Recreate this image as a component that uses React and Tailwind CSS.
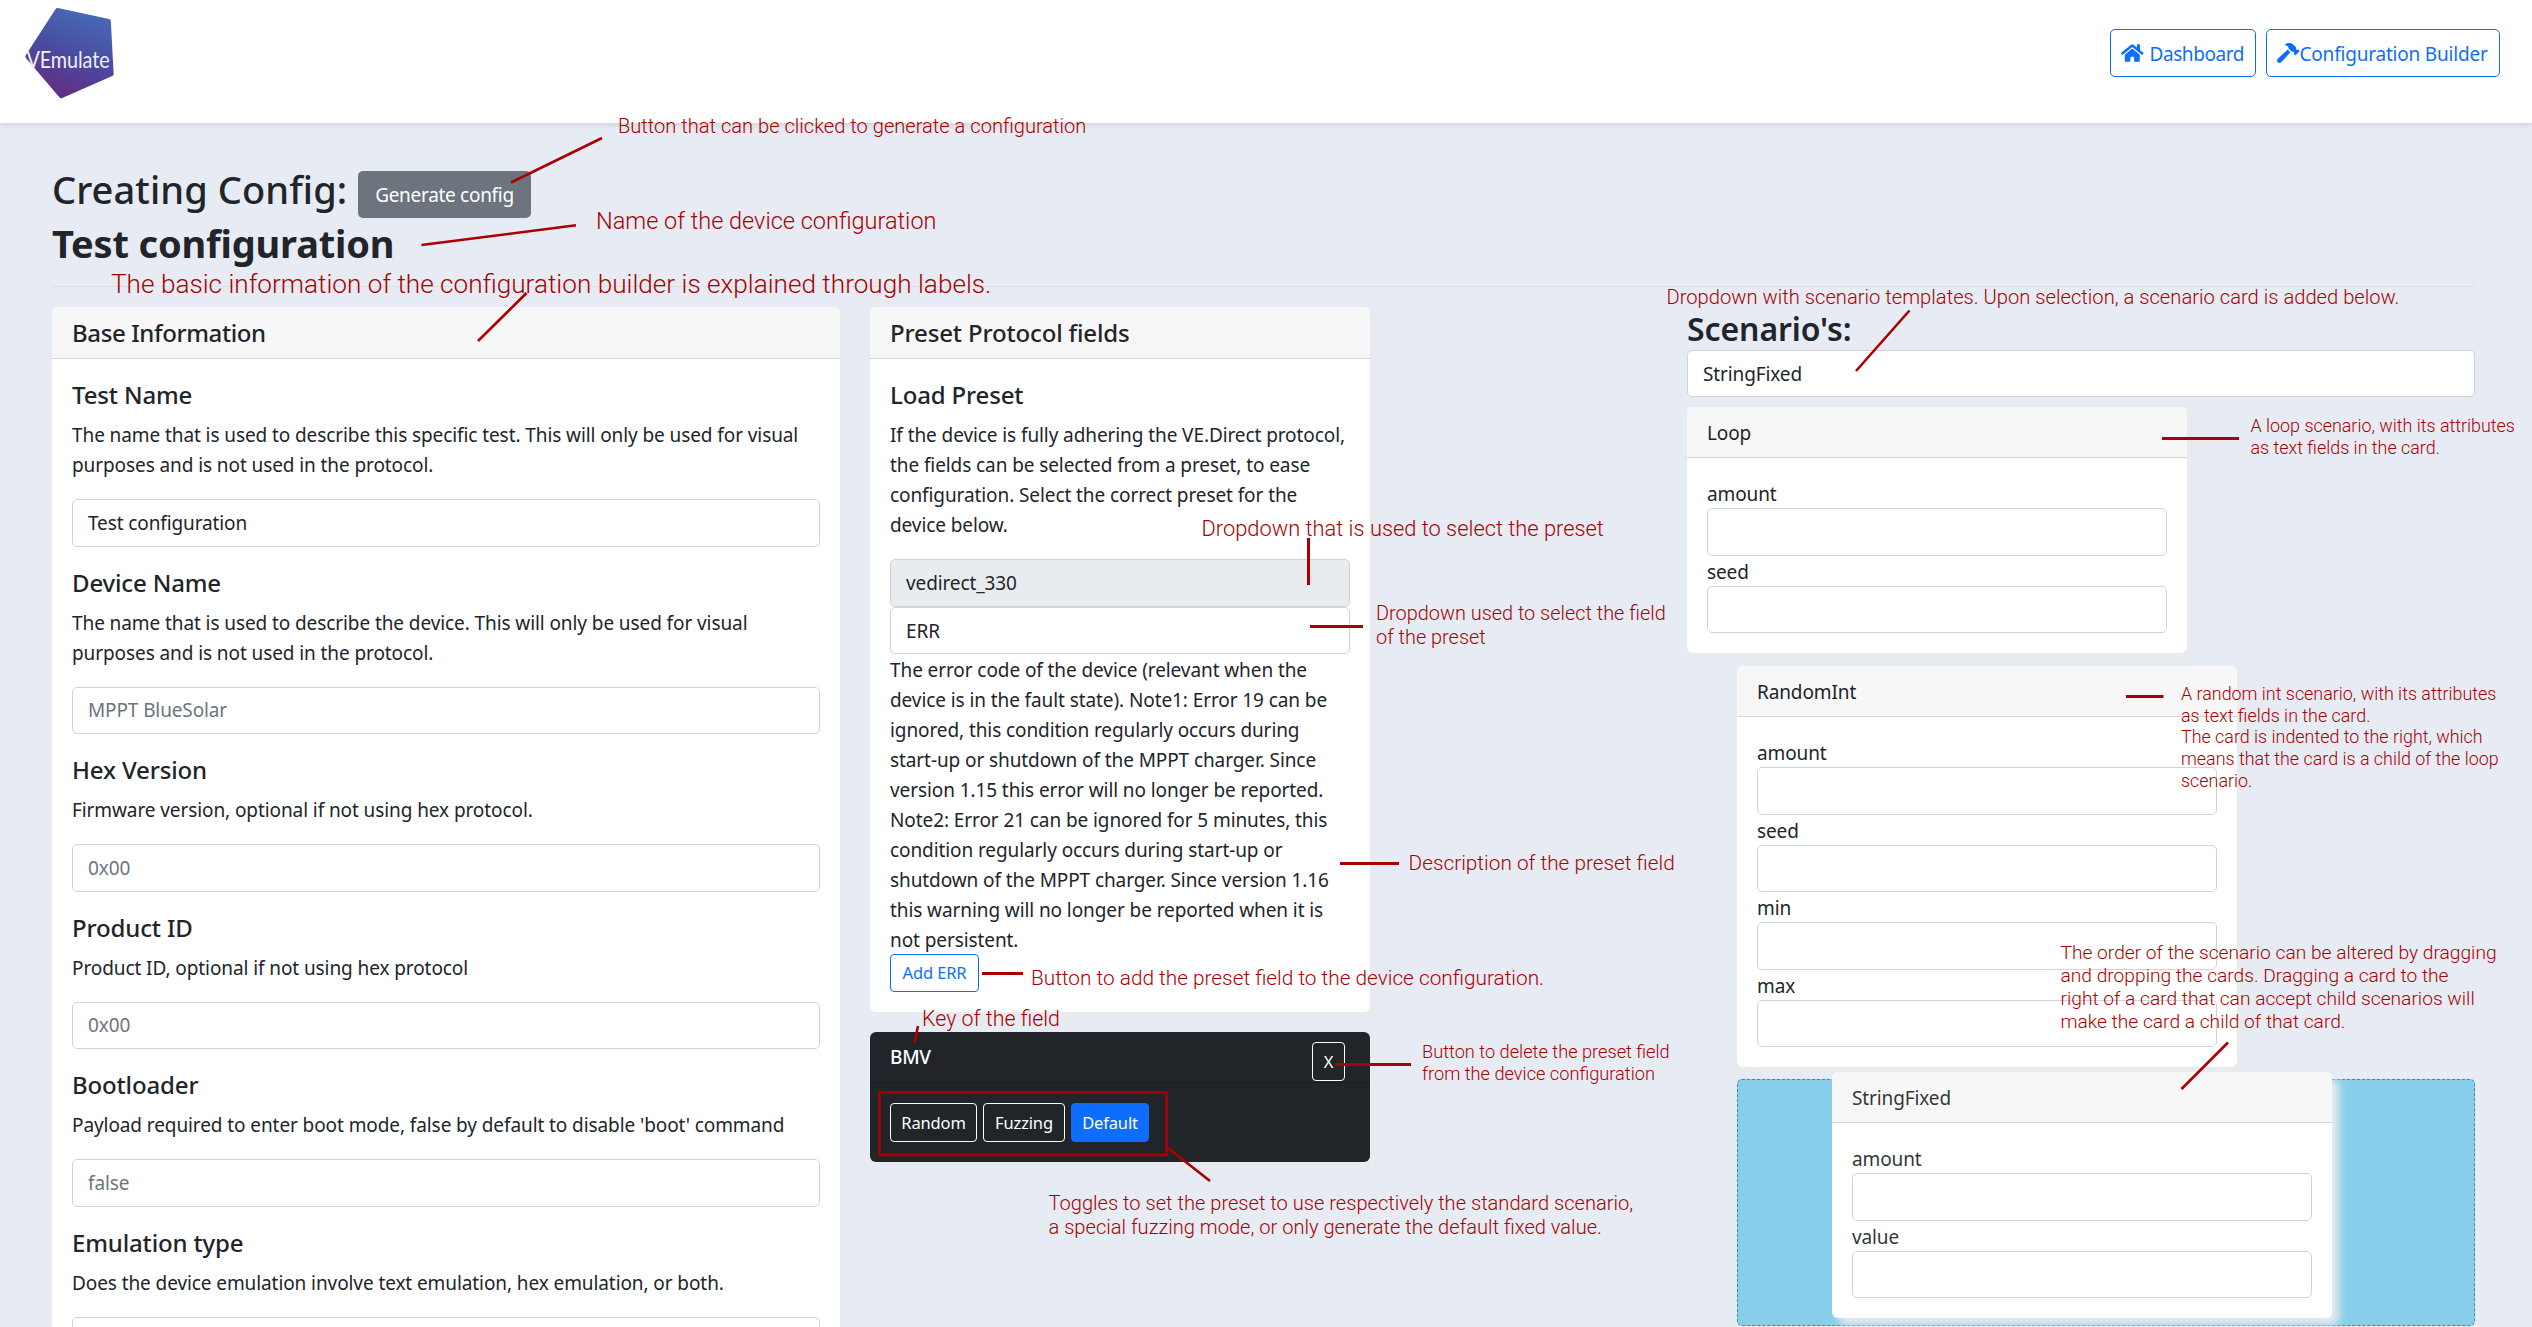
import React from "react";
import { FaHome, FaHammer } from "react-icons/fa";

const control =
  "flex h-[47.5px] w-full items-center rounded-[5px] border border-[#ced4da] bg-white px-[15px] leading-[30px]";

function Logo() {
  return (
    <svg width="120" height="110" viewBox="0 0 120 110" className="block">
      <defs>
        <linearGradient id="logoFill" x1="0.25" y1="1" x2="0.6" y2="0">
          <stop offset="0" stopColor="#652a80" />
          <stop offset="0.5" stopColor="#4a4a9f" />
          <stop offset="1" stopColor="#4768b5" />
        </linearGradient>
      </defs>
      <path
        d="M57.5 10.3 L108.6 21.3 L111.4 74 L61.3 96 L27.6 56.5 Z"
        fill="url(#logoFill)"
        stroke="url(#logoFill)"
        strokeWidth="4.5"
        strokeLinejoin="round"
      />
      <text
        x="26.5"
        y="67.7"
        fill="#f1eff8"
        fontSize="23"
        fontFamily="Lato, sans-serif"
        textLength="83"
        lengthAdjust="spacingAndGlyphs"
      >
        VEmulate
      </text>
    </svg>
  );
}

function NavButton({ children, className }) {
  return (
    <a
      className={
        "flex h-[48px] items-center rounded-[5px] border border-[#0d6efd] pl-[10px] leading-[30px] text-[#0d6efd] " +
        className
      }
    >
      {children}
    </a>
  );
}

function Card({ children, className = "", tone = "bg-white" }) {
  return (
    <section
      className={
        "overflow-hidden rounded-[6px] shadow-[7px_7px_8px_#e8ebee] " +
        tone +
        " " +
        className
      }
    >
      {children}
    </section>
  );
}

function SectionTitle({ children, className = "tracking-[-0.15px]" }) {
  return (
    <h2
      className={
        "h-[52px] border-b border-[#d6d6d6] bg-[#f7f7f7] px-[20px] pt-[11px] text-[24px] font-medium leading-[30px] " +
        className
      }
    >
      {children}
    </h2>
  );
}

function Field({ title, text, value, placeholder }) {
  return (
    <div className="mb-[21px]">
      <h3 className="mb-[10px] text-[24px] font-medium leading-[30px] tracking-[-0.15px]">{title}</h3>
      <p className="mb-[19px] whitespace-pre leading-[30px] tracking-[-0.09px]">{text}</p>
      <div className={control}>
        {value && <span>{value}</span>}
        {placeholder && <span className="text-[#6c757d]">{placeholder}</span>}
      </div>
    </div>
  );
}

const baseFields = [
  {
    title: "Test Name",
    text: "The name that is used to describe this specific test. This will only be used for visual\npurposes and is not used in the protocol.",
    value: "Test configuration",
  },
  {
    title: "Device Name",
    text: "The name that is used to describe the device. This will only be used for visual\npurposes and is not used in the protocol.",
    placeholder: "MPPT BlueSolar",
  },
  {
    title: "Hex Version",
    text: "Firmware version, optional if not using hex protocol.",
    placeholder: "0x00",
  },
  {
    title: "Product ID",
    text: "Product ID, optional if not using hex protocol",
    placeholder: "0x00",
  },
  {
    title: "Bootloader",
    text: "Payload required to enter boot mode, false by default to disable 'boot' command",
    placeholder: "false",
  },
  {
    title: "Emulation type",
    text: "Does the device emulation involve text emulation, hex emulation, or both.",
  },
];

const presetIntro =
  "If the device is fully adhering the VE.Direct protocol,\nthe fields can be selected from a preset, to ease\nconfiguration. Select the correct preset for the\ndevice below.";

const presetDescription =
  "The error code of the device (relevant when the\ndevice is in the fault state). Note1: Error 19 can be\nignored, this condition regularly occurs during\nstart-up or shutdown of the MPPT charger. Since\nversion 1.15 this error will no longer be reported.\nNote2: Error 21 can be ignored for 5 minutes, this\ncondition regularly occurs during start-up or\nshutdown of the MPPT charger. Since version 1.16\nthis warning will no longer be reported when it is\nnot persistent.";

function ScenarioCard({ name, fields, className = "" }) {
  return (
    <Card className={"w-[500px] " + className}>
      <div className="h-[51px] border-b border-[#d6d6d6] bg-[#f7f7f7] px-[20px] pt-[11px] leading-[30px]">
        {name}
      </div>
      <div className="p-[20px]">
        {fields.map((f) => (
          <label key={f} className="block">
            <span className="block h-[30px] leading-[32px]">{f}</span>
            <span className={control} />
          </label>
        ))}
      </div>
    </Card>
  );
}

const smallButton =
  "flex h-[39px] items-center justify-center rounded-[4px] border pt-[2px] text-[16.5px] tracking-[-0.15px]";

const notes = [
  ["left-[618px] top-[113.8px] text-[20.1px] leading-[24px]", "Button that can be clicked to generate a configuration"],
  ["left-[596px] top-[206.7px] text-[23.5px] leading-[28px]", "Name of the device configuration"],
  ["left-[111px] top-[268.8px] text-[26.17px] leading-[30px]", "The basic information of the configuration builder is explained through labels."],
  ["left-[1201.5px] top-[515.6px] text-[21.85px] leading-[26px]", "Dropdown that is used to select the preset"],
  ["left-[1376px] top-[602px] text-[19.9px] leading-[24px]", "Dropdown used to select the field\nof the preset"],
  ["left-[1408.5px] top-[850.9px] text-[20.8px] leading-[24px]", "Description of the preset field"],
  ["left-[1031px] top-[965.6px] text-[20.8px] leading-[24px]", "Button to add the preset field to the device configuration."],
  ["left-[922px] top-[1005.7px] text-[21.4px] leading-[26px]", "Key of the field"],
  ["left-[1422px] top-[1041.1px] text-[18.2px] leading-[22px]", "Button to delete the preset field\nfrom the device configuration"],
  ["left-[1048.5px] top-[1191.2px] text-[20.1px] leading-[24px]", "Toggles to set the preset to use respectively the standard scenario,\na special fuzzing mode, or only generate the default fixed value."],
  ["left-[1666.5px] top-[285.1px] text-[20.18px] leading-[24px]", "Dropdown with scenario templates. Upon selection, a scenario card is added below."],
  ["left-[2250.5px] top-[415.3px] text-[17.9px] leading-[21.7px]", "A loop scenario, with its attributes\nas text fields in the card."],
  ["left-[2181px] top-[683px] text-[17.9px] leading-[21.7px]", "A random int scenario, with its attributes\nas text fields in the card.\nThe card is indented to the right, which\nmeans that the card is a child of the loop\nscenario."],
  ["left-[2060.5px] top-[941.3px] text-[19.2px] leading-[23px]", "The order of the scenario can be altered by dragging\nand dropping the cards. Dragging a card to the\nright of a card that can accept child scenarios will\nmake the card a child of that card."],
];

function Annotations() {
  return (
    <div className="pointer-events-none absolute inset-0 font-['Roboto',sans-serif] font-light tracking-normal text-[#aa0000]">
      <svg
        width="2532"
        height="1327"
        viewBox="0 0 2532 1327"
        fill="none"
        stroke="#aa0000"
        strokeWidth="2.6"
        className="absolute inset-0"
      >
        <path d="M511 182.500 L602 138 M421.500 245 L576 225.300 M526.500 293 L478 341" />
        <path d="M1308.500 538 V585 M1310 626.500 H1363 M1340 863.500 H1399 M982 973.500 H1023 M1335 1064.500 H1411 M2162 438.500 H2239 M2126 696.500 H2163.500" strokeWidth="3" />
        <path d="M918 1026 L914.500 1042.500 M1168 1148 L1210 1181 M1909.500 310.500 L1856 371 M2228 1042.500 L2181.500 1089" />
        <rect x="879.500" y="1092.500" width="287" height="62.500" />
      </svg>
      {notes.map(([place, text]) => (
        <p key={text} className={"absolute whitespace-pre " + place}>
          {text}
        </p>
      ))}
    </div>
  );
}

export default function App() {
  return (
    <div className="relative h-[1327px] w-[2532px] overflow-hidden bg-[#e6ebf4] font-['Noto_Sans',sans-serif] text-[19px] tracking-[-0.12px] text-[#212529]">
      <header className="flex h-[123px] items-start justify-between bg-white pr-[32px] shadow-[0_2.5px_5px_rgba(0,0,0,0.09)]">
        <Logo />
        <nav className="flex gap-[10px] pt-[29px]">
          <NavButton className="w-[146px] tracking-[-0.42px]">
            <FaHome className="mr-[6px] h-[20px] w-[22.500px]" />
            <span className="pt-[2px]">Dashboard</span>
          </NavButton>
          <NavButton className="w-[234px] tracking-[-0.2px]">
            <FaHammer className="h-[20px] w-[22.500px]" />
            <span className="pt-[2px]">Configuration Builder</span>
          </NavButton>
        </nav>
      </header>

      <main className="px-[52px] pt-[41px]">
        <div className="flex h-[55px] items-start">
          <h1 className="w-[306px] whitespace-nowrap text-[38px] font-medium leading-[50px] tracking-[0.08px]">
            Creating Config:
          </h1>
          <button className="mt-[7px] h-[47px] w-[173px] rounded-[5px] bg-[#6c757d] pt-px leading-[30px] tracking-[-0.3px] text-white">
            Generate config
          </button>
        </div>
        <div className="h-[67px] text-[38px] font-bold leading-[48px] tracking-[-0.18px]">
          Test configuration
        </div>
        <hr className="mb-[20px] w-[2423px] border-t border-[#dcdfe5]" />

        <div className="flex items-start">
          <Card className="mr-[30px] w-[788px]">
            <SectionTitle className="tracking-[-0.38px]">Base Information</SectionTitle>
            <div className="px-[20px] pt-[21px]">
              {baseFields.map((f) => (
                <Field key={f.title} {...f} />
              ))}
            </div>
          </Card>

          <div className="mr-[317px] w-[500px]">
            <Card>
              <SectionTitle>Preset Protocol fields</SectionTitle>
              <div className="px-[20px] pb-[20px] pt-[21px]">
                <h3 className="mb-[10px] text-[24px] font-medium leading-[30px] tracking-[-0.15px]">
                  Load Preset
                </h3>
                <p className="mb-[19px] whitespace-pre leading-[30px] tracking-[-0.09px]">{presetIntro}</p>
                <div className="flex h-[47.5px] w-full items-center rounded-[5px] border border-[#ced4da] bg-[#e9ecef] px-[15px] leading-[30px]">
                  vedirect_330
                </div>
                <div className={control + " pt-[2px]"}>ERR</div>
                <p className="-mb-px whitespace-pre pt-px leading-[30px] tracking-[-0.09px]">{presetDescription}</p>
                <button className="flex h-[38px] w-[89px] items-center justify-center rounded-[4px] border border-[#0d6efd] pt-px text-[16.5px] text-[#0d6efd]">
                  Add ERR
                </button>
              </div>
            </Card>

            <Card tone="bg-[#212529]" className="mt-[20px] h-[130px] text-white">
              <div className="flex h-[51px] justify-between border-b border-[#1b1e21] pl-[20px] pr-[25px] pt-[10px]">
                <span className="font-medium leading-[30px] tracking-[-0.3px]">BMV</span>
                <button className={smallButton + " w-[33px] border-white"}>X</button>
              </div>
              <div className="flex gap-[6px] p-[20px]">
                <button className={smallButton + " w-[87px] border-white"}>Random</button>
                <button className={smallButton + " w-[82px] border-white"}>Fuzzing</button>
                <button className={smallButton + " w-[78px] border-[#0d6efd] bg-[#0d6efd]"}>Default</button>
              </div>
            </Card>
          </div>

          <div className="w-[788px]">
            <h2 className="h-[42.5px] pt-[2px] text-[32px] font-semibold leading-[39px] tracking-[-0.1px]">
              Scenario's:
            </h2>
            <div className={control + " mb-[10px] pt-[2px]"}>StringFixed</div>
            <ScenarioCard name="Loop" fields={["amount", "seed"]} className="mb-[13px]" />
            <ScenarioCard
              name="RandomInt"
              fields={["amount", "seed", "min", "max"]}
              className="mb-[12px] ml-[50px]"
            />
            <div className="relative ml-[50px] h-[247px] rounded-[5px] border border-dashed border-[#4682b4] bg-[#87ceeb]">
              <ScenarioCard
                name="StringFixed"
                fields={["amount", "value"]}
                className="absolute -top-[8px] left-[94px] text-[#33373b]"
              />
            </div>
          </div>
        </div>
      </main>

      <Annotations />
    </div>
  );
}
